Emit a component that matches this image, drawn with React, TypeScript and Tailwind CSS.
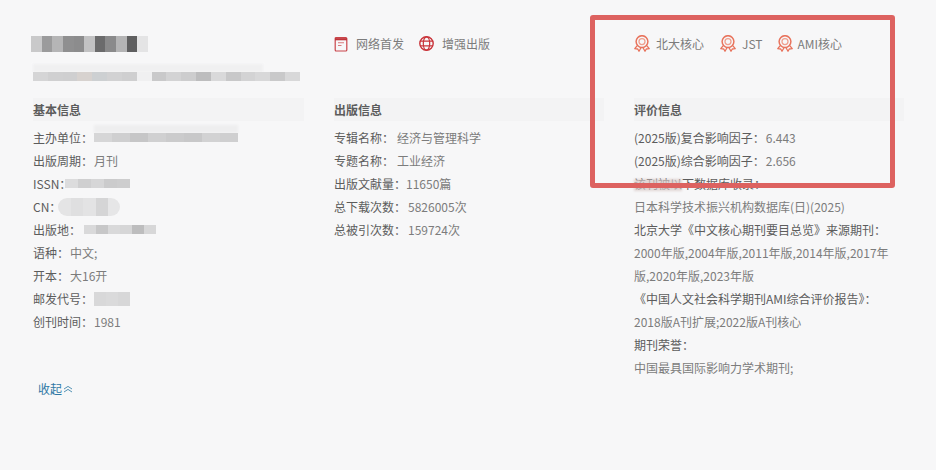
const FONT = "font-['Noto_Sans_CJK_SC','Noto_Sans',sans-serif]";

function Mosaic({ cells, className, haze }: { cells: string[]; className: string; haze?: string }) {
  return (
    <span className={`relative block ${className}`}>
      {haze && <span className={`absolute left-0 bottom-full h-[8px] bg-[#eeeeef] blur-[1px] ${haze}`} />}
      <span className="flex w-full h-full overflow-hidden blur-[0.6px] rounded-[inherit]">
        {cells.map((c, i) => (
          <span key={i} className="flex-1 h-full" style={{ backgroundColor: c }} />
        ))}
      </span>
    </span>
  );
}

function BookIcon() {
  return (
    <svg width="14" height="16" viewBox="0 0 14 16" fill="none" className="shrink-0">
      <rect x="1.2" y="1.5" width="11.6" height="13.5" rx="1" stroke="#c9454a" strokeWidth="1.2" />
      <path d="M1 3.2h12" stroke="#c0343a" strokeWidth="2.2" />
      <path d="M4 6.8h6M4 9.5h3.5" stroke="#d9797c" strokeWidth="1.1" />
    </svg>
  );
}

function GlobeIcon() {
  return (
    <svg width="15" height="15" viewBox="0 0 15 15" fill="none" className="shrink-0">
      <circle cx="7.5" cy="7.5" r="6.7" stroke="#c9343a" strokeWidth="1.4" />
      <ellipse cx="7.5" cy="7.5" rx="3.2" ry="6.7" stroke="#c9343a" strokeWidth="1.2" />
      <path d="M1.2 5.2h12.6M1.2 9.8h12.6" stroke="#c9343a" strokeWidth="1.2" />
    </svg>
  );
}

function AwardIcon() {
  return (
    <svg width="16" height="17" viewBox="0 0 16 17" fill="none" className="shrink-0">
      <circle cx="8" cy="6.6" r="5.9" stroke="#e8735c" strokeWidth="1.5" />
      <circle cx="8" cy="6.6" r="3" stroke="#efa08f" strokeWidth="1.3" />
      <path d="M3.2 10.6L0.8 13.7l2.9.3 1.3 2.3 2-3.5M12.8 10.6l2.4 3.1-2.9.3-1.3 2.3-2-3.5" stroke="#e8735c" strokeWidth="1.3" strokeLinejoin="round" />
    </svg>
  );
}

function DoubleUp() {
  return (
    <svg width="10" height="8" viewBox="0 0 10 8" fill="none" className="ml-px mt-px">
      <path d="M1 4l4-2.6L9 4M1 7l4-2.6L9 7" stroke="#3f86ab" strokeWidth="0.9" />
    </svg>
  );
}

function Row({ children }: { children: React.ReactNode }) {
  return <p className="flex items-center h-[23px] whitespace-nowrap">{children}</p>;
}

function Label({ children }: { children: React.ReactNode }) {
  return <span className="text-[#5c5c5c]">{children}</span>;
}

function Value({ children, className = '' }: { children: React.ReactNode; className?: string }) {
  return <span className={`text-[#7c7c7c] ${className}`}>{children}</span>;
}

function Heading({ children }: { children: React.ReactNode }) {
  return (
    <h3 className="h-[23px] leading-[23px] bg-[#f3f3f4] text-[#5c5c5c] font-bold mb-[5px]">{children}</h3>
  );
}

export default function App() {
  return (
    <div className={`relative w-[936px] h-[470px] overflow-hidden bg-[#f7f7f8] text-xs ${FONT}`}>
      <div className="pl-[33px] pt-[32px]">
        {/* top row */}
        <div className="grid grid-cols-[271px_270px_270px] gap-x-[30px] h-[66px]">
          <div>
            <Mosaic
              className="w-[117px] h-[16px] -ml-[2px] mt-[4px]"
              cells={['#c9c9ca', '#9b9b9c', '#b5b5b6', '#8f8f90', '#8c8c8d', '#c2c2c3', '#6b6b6c', '#8a8a8b', '#b4b4b5', '#5f5f60', '#e4e4e5']}
            />
            <Mosaic
              className="w-[267px] h-[9px] mt-[20px]"
              haze="w-[230px] opacity-70"
              cells={['#d5d5d6', '#d0d0d1', '#cfcfd0', '#d7d2cf', '#cdd0d2', '#d2d2d3', '#cfcfd0', '#f0f0f1', '#c9c9ca', '#d3d3d4', '#cdcdce', '#bdbdbe', '#d9d9da', '#c8c8c9', '#d3d3d4', '#d8d8d9', '#c9c9ca', '#d8d8d9']}
            />
          </div>
          <div className="flex items-start h-[23px] text-[#7c7c7c]">
            <span className="flex items-center h-[23px] gap-[8px]">
              <BookIcon />
              网络首发
            </span>
            <span className="flex items-center h-[23px] gap-[8px] ml-[15px]">
              <GlobeIcon />
              增强出版
            </span>
          </div>
          <div className="flex items-start h-[23px] text-[#7c7c7c]">
            <span className="flex items-center h-[23px] gap-[6px]">
              <AwardIcon />
              北大核心
            </span>
            <span className="flex items-center h-[23px] gap-[6px] ml-[16px]">
              <AwardIcon />
              JST
            </span>
            <span className="flex items-center h-[23px] gap-[5px] ml-[14px]">
              <AwardIcon />
              AMI核心
            </span>
          </div>
        </div>

        {/* info columns */}
        <div className="grid grid-cols-[271px_270px_270px] gap-x-[30px]">
          <div>
            <Heading>基本信息</Heading>
            <Row>
              <Label>主办单位：</Label>
              <Mosaic className="w-[144px] h-[9px] ml-px" haze="w-full" cells={['#d6d6d7', '#cfcfd0', '#c6c6c7', '#d0d0d1', '#cbcbcc', '#c8c8c9', '#d2d2d3', '#cfcfd0']} />
            </Row>
            <Row>
              <Label>出版周期：</Label>
              <Value className="ml-px">月刊</Value>
            </Row>
            <Row>
              <Label>ISSN：</Label>
              <Mosaic className="w-[65px] h-[9px] -ml-[6px]" cells={['#dcdcdd', '#cfcfd0', '#d6d6d7', '#cbcbcc', '#cdcdce']} />
            </Row>
            <Row>
              <Label>CN：</Label>
              <Mosaic className="w-[62px] h-[18px] rounded-full -ml-[3px]" cells={['#e4e4e5', '#dfdfe0', '#e3e3e4', '#d5d5d6', '#e6e6e7']} />
            </Row>
            <Row>
              <Label>出版地：</Label>
              <Mosaic className="w-[72px] h-[9px] ml-[3px]" cells={['#d9d9da', '#c7c7c8', '#d9d9da', '#d6d6d7', '#bdbdbe', '#d7d7d8']} />
            </Row>
            <Row>
              <Label>语种：</Label>
              <Value className="ml-px">中文;</Value>
            </Row>
            <Row>
              <Label>开本：</Label>
              <Value className="ml-px">大16开</Value>
            </Row>
            <Row>
              <Label>邮发代号：</Label>
              <Mosaic className="w-[36px] h-[14px] ml-px" cells={['#d8d8d9', '#dadadb', '#d7d7d8']} />
            </Row>
            <Row>
              <Label>创刊时间：</Label>
              <Value className="ml-px">1981</Value>
            </Row>
            <div className="flex items-center h-[23px] mt-[44px] ml-[5px] text-[#2f78a5]">
              收起
              <DoubleUp />
            </div>
          </div>

          <div>
            <Heading>出版信息</Heading>
            <Row>
              <Label>专辑名称：</Label>
              <Value className="ml-[3px]">经济与管理科学</Value>
            </Row>
            <Row>
              <Label>专题名称：</Label>
              <Value className="ml-[3px]">工业经济</Value>
            </Row>
            <Row>
              <Label>出版文献量：</Label>
              <Value>11650篇</Value>
            </Row>
            <Row>
              <Label>总下载次数：</Label>
              <Value className="ml-[2px]">5826005次</Value>
            </Row>
            <Row>
              <Label>总被引次数：</Label>
              <Value className="ml-[2px]">159724次</Value>
            </Row>
          </div>

          <div>
            <Heading>评价信息</Heading>
            <Row>
              <Label>(2025版)复合影响因子：</Label>
              <Value className="ml-px">6.443</Value>
            </Row>
            <Row>
              <Label>(2025版)综合影响因子：</Label>
              <Value className="ml-px">2.656</Value>
            </Row>
            <Row>
              <span className="relative text-[#5c5c5c]">
                该刊被以下数据库收录：
                <span className="absolute left-0 top-[3px] w-[48px] h-[12px] bg-[#d8c9c8]/70 blur-[1px]" />
              </span>
            </Row>
            <Row>
              <Value>日本科学技术振兴机构数据库(日)(2025)</Value>
            </Row>
            <Row>
              <Label>北京大学《中文核心期刊要目总览》来源期刊：</Label>
            </Row>
            <Row>
              <Value>2000年版,2004年版,2011年版,2014年版,2017年</Value>
            </Row>
            <Row>
              <Value>版,2020年版,2023年版</Value>
            </Row>
            <Row>
              <Label>《中国人文社会科学期刊AMI综合评价报告》：</Label>
            </Row>
            <Row>
              <Value>2018版A刊扩展;2022版A刊核心</Value>
            </Row>
            <Row>
              <Label>期刊荣誉：</Label>
            </Row>
            <Row>
              <Value>中国最具国际影响力学术期刊;</Value>
            </Row>
          </div>
        </div>
      </div>

      {/* red annotation box */}
      <div className="absolute left-[590px] top-[15px] w-[305px] h-[173px] border-[5px] border-[#dd6260] rounded-[3px]" />
    </div>
  );
}
